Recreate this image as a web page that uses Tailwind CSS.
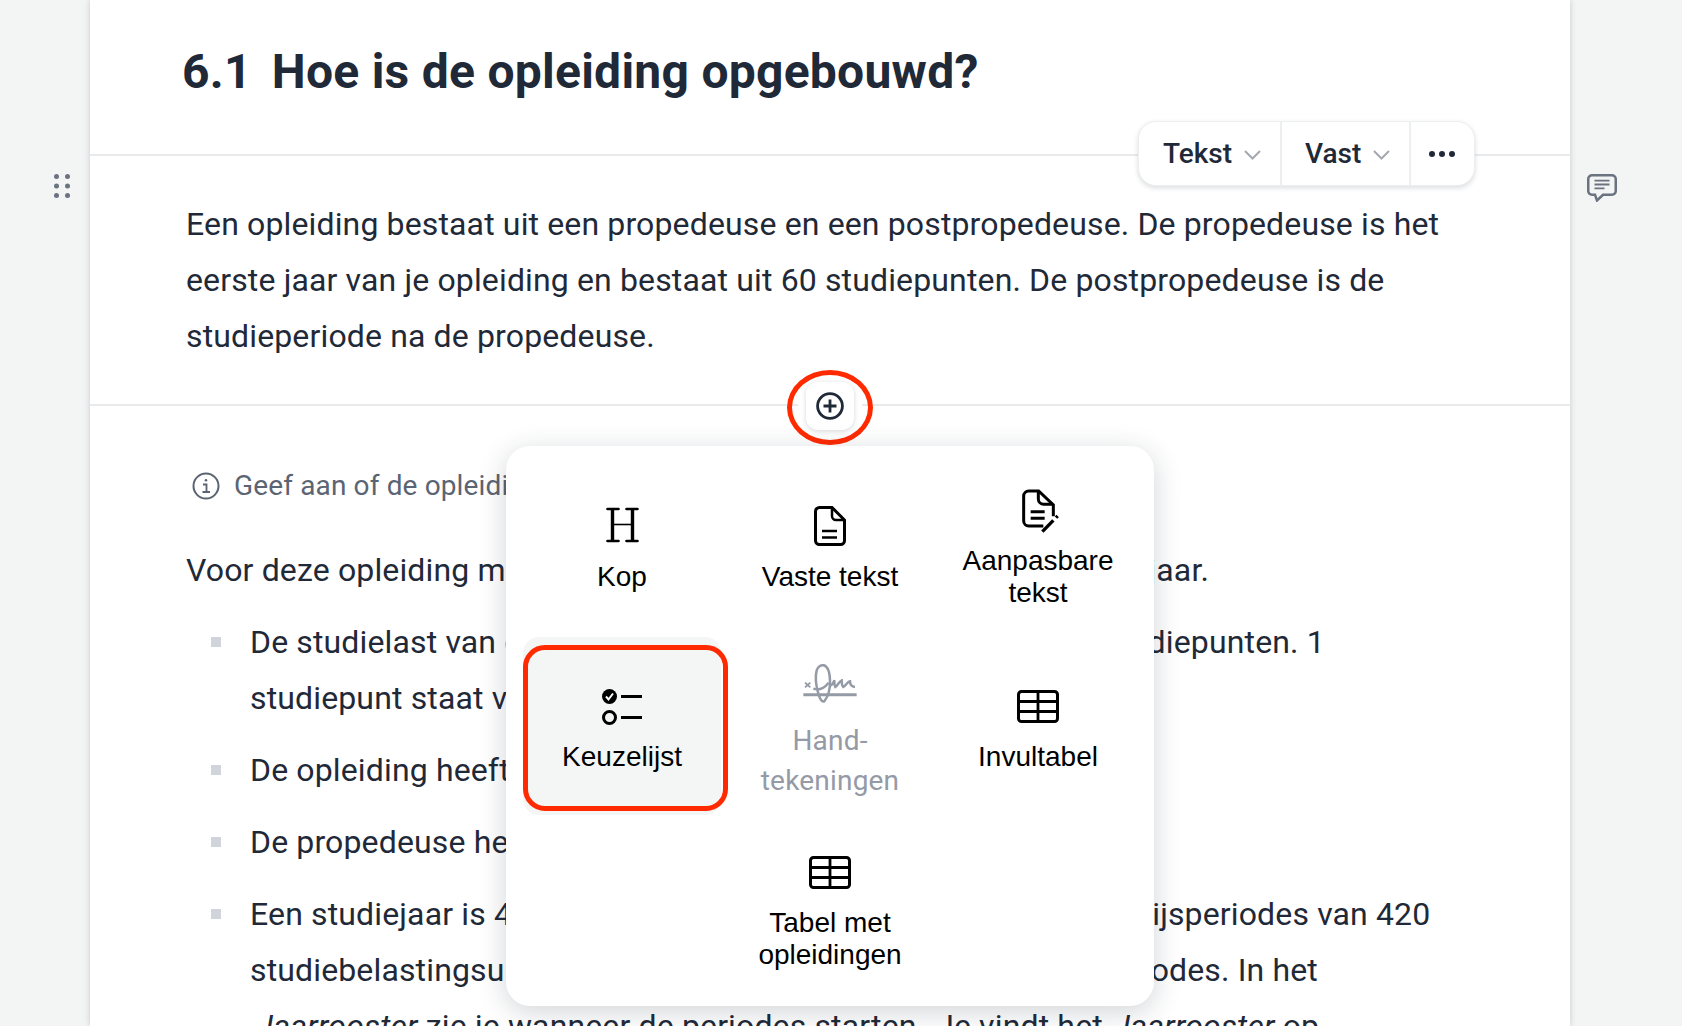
<!DOCTYPE html>
<html lang="nl">
<head>
  <meta charset="UTF-8" />
  <title>Hoe is de opleiding opgebouwd?</title>
  <script src="https://cdn.jsdelivr.net/npm/@tailwindcss/browser@4"></script>
</head>
<body class="bg-[#f3f5f5] font-['Roboto',sans-serif] text-[#1f2937] h-[1026px] overflow-hidden">
  <div class="flex h-[1026px]">

    <!-- Left gutter: drag handle -->
    <div class="w-[90px] shrink-0 pt-[174px] pl-[54px]">
      <svg width="16" height="24" viewBox="0 0 16 24" fill="#6b7280">
        <circle cx="2.500" cy="2.500" r="2.500"/><circle cx="13.500" cy="2.500" r="2.500"/>
        <circle cx="2.500" cy="12" r="2.500"/><circle cx="13.500" cy="12" r="2.500"/>
        <circle cx="2.500" cy="21.500" r="2.500"/><circle cx="13.500" cy="21.500" r="2.500"/>
      </svg>
    </div>

    <!-- Document -->
    <div class="relative w-[1480px] shrink-0 bg-white shadow-[0_0_6px_rgba(31,41,55,0.22)]">

      <!-- Title -->
      <div class="h-[156px] border-b-2 border-[#e9eaec] pl-[92px] pt-[42px]">
        <h1 class="flex gap-[20px] text-[48px] leading-[60px] font-bold tracking-[0.26px]"><span>6.1</span><span>Hoe is de opleiding opgebouwd?</span></h1>
      </div>

      <!-- Fixed paragraph -->
      <div class="h-[250px] border-b-2 border-[#e9eaec] pl-[96px] pt-[40px] text-[32px] leading-[56px] tracking-[0.14px]">
        Een opleiding bestaat uit een propedeuse en een postpropedeuse. De propedeuse is het<br>
        eerste jaar van je opleiding en bestaat uit 60 studiepunten. De postpropedeuse is de<br>
        studieperiode na de propedeuse.
      </div>

      <!-- Body -->
      <div class="pl-[96px] pt-[60px] whitespace-nowrap tracking-[0.14px]">
        <div class="flex items-center h-[40px] text-[28px] text-[#5b6472]">
          <svg class="ml-[6px] mr-[14px]" width="28" height="28" viewBox="0 0 28 28" fill="none" stroke="#5b6472" stroke-width="2">
            <circle cx="14" cy="14" r="12.500"/>
            <path d="M11 12.500h3.500v7.500M10.500 20h7.500" stroke-width="1.800"/>
            <circle cx="14" cy="8.200" r="1.300" fill="#5b6472" stroke="none"/>
          </svg>
          Geef aan of de opleiding een voltijd of deeltijd opleiding is.
        </div>

        <p class="mt-[36px] text-[32px] leading-[56px]">Voor deze opleiding moet je 60 studiepunten behalen per vol <span class="ml-[2px]">studiejaar.</span></p>

        <ul class="mt-[16px] text-[32px] leading-[56px]">
          <li class="flex mb-[16px]">
            <span class="w-[10px] h-[10px] bg-[#d1d5db] mt-[23px] ml-[25px] mr-[29px] shrink-0"></span>
            <span>De studielast van de hele opleiding wordt vaak uitgedrukt in <span class="ml-[-5px]">studiepunten. 1</span><br>studiepunt staat voor 28 uur studie.</span>
          </li>
          <li class="flex mb-[16px]">
            <span class="w-[10px] h-[10px] bg-[#d1d5db] mt-[23px] ml-[25px] mr-[29px] shrink-0"></span>
            <span>De opleiding heeft 240 studiepunten.</span>
          </li>
          <li class="flex mb-[16px]">
            <span class="w-[10px] h-[10px] bg-[#d1d5db] mt-[23px] ml-[25px] mr-[29px] shrink-0"></span>
            <span>De propedeuse heeft 60 studiepunten.</span>
          </li>
          <li class="flex">
            <span class="w-[10px] h-[10px] bg-[#d1d5db] mt-[23px] ml-[25px] mr-[29px] shrink-0"></span>
            <span>Een studiejaar is 42 lesweken en bestaat in totaal uit 4 <span class="ml-[11px]">onderwijsperiodes van 420</span><br>studiebelastingsuren. Je volgt daarom elk jaar meerdere <span class="ml-[34px]">periodes. In het</span><br><em class="ml-[6px]">Jaarrooster</em> zie je wanneer de periodes starten.<span class="ml-[11px]">Je vindt het</span> <em class="ml-[2px]">Jaarrooster</em> op</span>
          </li>
        </ul>
      </div>

      <!-- Block toolbar -->
      <div class="absolute left-[1048px] top-[121px] h-[65px] w-[337px] flex items-center bg-white rounded-[18px] border border-[#eceef0] shadow-[0_2px_5px_rgba(31,41,55,0.16)] text-[28px] font-medium">
        <div class="h-full w-[143px] flex items-center pl-[24px] border-r-2 border-[#eceef0]">
          Tekst
          <svg class="ml-[12px] mt-[3px]" width="17" height="10" viewBox="0 0 17 10" fill="none" stroke="#a3a8b1" stroke-width="2"><path d="M1 1l7.500 7.500L16 1"/></svg>
        </div>
        <div class="h-full w-[129px] flex items-center pl-[23px] border-r-2 border-[#eceef0]">
          Vast
          <svg class="ml-[12px] mt-[3px]" width="17" height="10" viewBox="0 0 17 10" fill="none" stroke="#a3a8b1" stroke-width="2"><path d="M1 1l7.500 7.500L16 1"/></svg>
        </div>
        <div class="flex-1 flex justify-center pr-[2px]">
          <svg width="26" height="6" viewBox="0 0 26 6" fill="#1f2937"><circle cx="3" cy="3" r="3"/><circle cx="13" cy="3" r="3"/><circle cx="23" cy="3" r="3"/></svg>
        </div>
      </div>

      <!-- Add block button -->
      <div class="absolute left-[708px] top-[400px] w-[64px] h-[12px] bg-white"></div>
      <div class="absolute left-[716px] top-[382px] w-[48px] h-[48px] flex items-center justify-center bg-white rounded-[12px] shadow-[0_1px_5px_rgba(31,41,55,0.18)]">
        <svg width="28" height="28" viewBox="0 0 28 28" fill="none" stroke="#1f2937" stroke-width="2.800">
          <circle cx="14" cy="14" r="12.400"/><path d="M14 7.500v13M7.500 14h13"/>
        </svg>
      </div>
      <!-- Red annotation around the button -->
      <div class="absolute left-[697px] top-[370px] w-[86px] h-[75px] rounded-[50%] border-[5px] border-[#ff2a00]"></div>

      <!-- Block menu -->
      <div class="absolute left-[416px] top-[446px] w-[648px] h-[560px] bg-white rounded-[24px] shadow-[0_6px_28px_rgba(31,41,55,0.2)] py-[16px] pl-[17px] font-['Liberation_Sans',sans-serif] text-[28px] leading-[32px] tracking-normal text-black">
        <div class="grid grid-cols-[198px_198px_198px] grid-rows-[175px_178px_175px] gap-x-[10px] text-center">

          <div class="flex flex-col items-center justify-center">
            <svg width="33" height="36" viewBox="0 0 33 36" fill="none" stroke="#000" class="mb-[18px]">
              <path d="M1.500 2h11M20.500 2h11M1.500 34h11M20.500 34h11" stroke-width="2.600" stroke-linecap="round"/>
              <path d="M6.500 2v32M26.500 2v32" stroke-width="3.400"/>
              <path d="M6.500 17.500h20" stroke-width="1.600"/>
            </svg>
            <span>Kop</span>
          </div>

          <div class="flex flex-col items-center justify-center">
            <svg width="32" height="40" viewBox="0 0 32 40" fill="none" stroke="#000" stroke-width="3" class="mb-[15px]">
              <path d="M5.500 1.500H18L30.500 14v20.500a4 4 0 0 1-4 4h-21a4 4 0 0 1-4-4v-29a4 4 0 0 1 4-4z"/>
              <path d="M18 2v8a4 4 0 0 0 4 4h8M8 25h15M8 31.500h15" stroke-width="2.500"/>
            </svg>
            <span>Vaste tekst</span>
          </div>

          <div class="flex flex-col items-center justify-center pb-[9px]">
            <svg width="60" height="60" viewBox="0 0 180 180" fill="none" stroke="#000" stroke-width="9" class="mb-[4px] ml-[4px]">
              <path d="M100 135H56a15 15 0 0 1-15-15V45a15 15 0 0 1 15-15h30l44 42v34"/>
              <path d="M85 32v22a16 16 0 0 0 16 16h28M62 92h42M62 112h42"/>
              <path d="M97 152l33-34" stroke-width="10"/>
              <path d="M138 110l5-5" stroke-width="10"/>
            </svg>
            <span>Aanpasbare<br>tekst</span>
          </div>

          <div class="flex flex-col items-center justify-center pt-[10px] bg-[#f4f6f5] rounded-[16px]">
            <svg width="40" height="36" viewBox="0 0 40 36" fill="none" stroke="#000" stroke-width="3" class="mb-[16px]">
              <circle cx="7.500" cy="7.500" r="7.500" fill="#000" stroke="none"/>
              <path d="M4 7.500l2.500 3 4.500-6" stroke="#fff" stroke-width="2"/>
              <circle cx="7.500" cy="28.500" r="6"/>
              <path d="M19 7.500h21M19 28.500h21"/>
            </svg>
            <span>Keuzelijst</span>
          </div>

          <div class="flex flex-col items-center justify-center font-['Roboto',sans-serif] text-[28px] leading-[40px] tracking-[0.2px] text-[#949aa6]">
            <svg width="70" height="60" viewBox="0 0 210 180" fill="none" stroke="#949aa6" stroke-width="7.500" class="mb-[9px]">
              <path d="M25 128H185" stroke-width="9"/>
              <path d="M30 92l16 14M46 92l-16 14" stroke-width="5.500"/>
              <path d="M65 55C68 44 78 38 86 40 98 43 104 58 105 85 106 112 100 132 88 148 80 152 74 138 70 125 64 104 60 74 65 55z"/>
              <path d="M55 110c12 4 30 2 46-18M106 100c6 0 9-8 12-15 0 8 0 16 3 20 7-4 12-18 19-20 0 8 0 16 5 20 8-4 13-17 20-17 0 8 3 16 15 17"/>
            </svg>
            <span>Hand-<br>tekeningen</span>
          </div>

          <div class="flex flex-col items-center justify-center pt-[10px]">
            <svg width="42" height="33" viewBox="0 0 42 33" fill="none" stroke="#000" stroke-width="3" class="mb-[18px]">
              <rect x="1.500" y="1.500" width="39" height="30" rx="3"/>
              <path d="M21 2v29M2 11.500h38M2 21.500h38" stroke-width="2.800"/>
            </svg>
            <span>Invultabel</span>
          </div>

          <div class="col-start-2 flex flex-col items-center justify-center mt-[22px]">
            <svg width="42" height="33" viewBox="0 0 42 33" fill="none" stroke="#000" stroke-width="3" class="mb-[18px]">
              <rect x="1.500" y="1.500" width="39" height="30" rx="3"/>
              <path d="M21 2v29M2 11.500h38M2 21.500h38" stroke-width="2.800"/>
            </svg>
            <span>Tabel met<br>opleidingen</span>
          </div>
        </div>
      </div>

      <!-- Red annotation around Keuzelijst -->
      <div class="absolute left-[433px] top-[645px] w-[205px] h-[166px] rounded-[22px] border-[5px] border-[#ff2a00]"></div>
    </div>

    <!-- Right gutter: comment -->
    <div class="flex-1 pt-[174px] pl-[17px]">
      <svg width="30" height="28" viewBox="0 0 30 28" fill="none" stroke="#6b7280" stroke-width="2.500">
        <path d="M5 1.250h20A3.750 3.750 0 0 1 28.750 5v12A3.750 3.750 0 0 1 25 20.750H16L10 26.500 8 20.750H5A3.750 3.750 0 0 1 1.250 17V5A3.750 3.750 0 0 1 5 1.250z"/>
        <path d="M7.500 6.700h15M7.500 10.500h15M7.500 14.300h10" stroke-width="1.800"/>
      </svg>
    </div>
  </div>
</body>
</html>
